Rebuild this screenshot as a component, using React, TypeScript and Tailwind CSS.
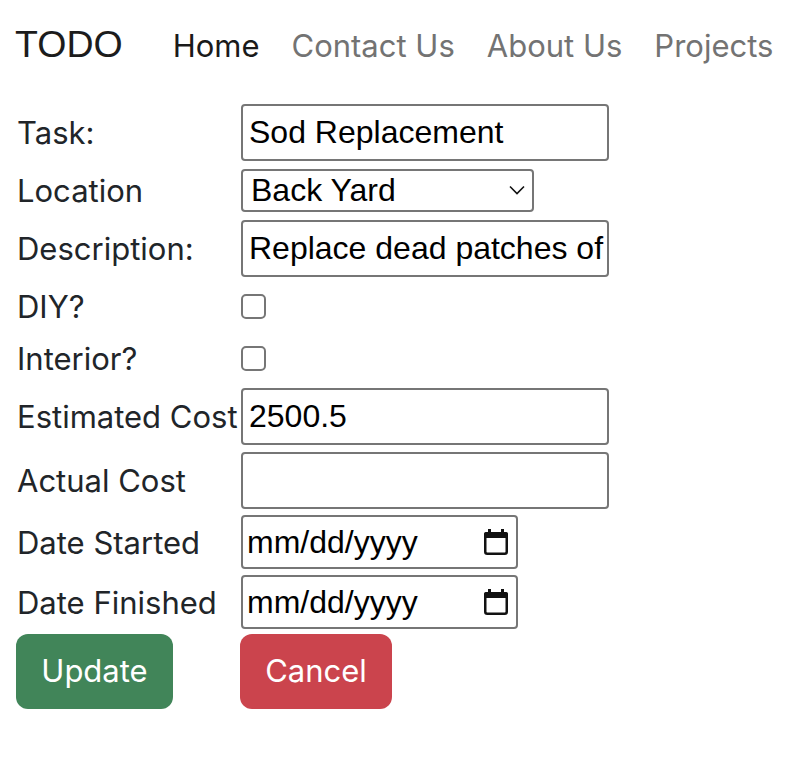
import React from "react";

const labelCls = "w-[224px] shrink-0 text-[31px] text-[#212529] leading-none";
const sans = { fontFamily: "Inter, 'Noto Sans', sans-serif" } as React.CSSProperties;

function Row({ h, label, children }: { h: string; label: string; children?: React.ReactNode }) {
  return (
    <div className={`flex items-center ${h}`}>
      <div className={labelCls} style={sans}>{label}</div>
      {children}
    </div>
  );
}

function TextBox({ w, value }: { w: string; value: string }) {
  return (
    <div
      className={`${w} h-[57px] border-2 border-[#767676] rounded-[4px] bg-white flex items-center pl-[6px] overflow-hidden whitespace-nowrap text-[32px] text-black`}
      style={{ fontFamily: "'Liberation Sans', Arial, sans-serif" }}
    >
      {value}
    </div>
  );
}

function Checkbox() {
  return <div className="w-[25px] h-[25px] border-2 border-[#767676] rounded-[5px] bg-white" />;
}

function DateBox() {
  return (
    <div
      className="w-[277px] h-[54px] border-2 border-[#767676] rounded-[4px] bg-white flex items-center pl-[4px] pr-[8px] justify-between text-[32px] text-black"
      style={{ fontFamily: "'Liberation Sans', Arial, sans-serif" }}
    >
      <span>mm/dd/yyyy</span>
      <svg width="24" height="26" viewBox="0 0 24 26">
        <rect x="4" y="0" width="3" height="4" fill="#111" />
        <rect x="17" y="0" width="3" height="4" fill="#111" />
        <rect x="0" y="3" width="24" height="6" rx="2" fill="#111" />
        <rect x="1.25" y="4.25" width="21.5" height="20.5" rx="2" fill="none" stroke="#111" strokeWidth="2.5" />
      </svg>
    </div>
  );
}

export default function App() {
  return (
    <div className="w-[808px] h-[772px] bg-white">
      <nav className="flex items-center h-[90px] pl-[15px]">
        <div
          className="text-[37.5px] text-[#1c1c1c] mr-[34px] leading-none"
          style={{ fontFamily: "'Liberation Sans', Arial, sans-serif" }}
        >
          TODO
        </div>
        <div className="flex items-center text-[31px] leading-none" style={sans}>
          <span className="px-[16px] text-[#1a1a1a]">Home</span>
          <span className="px-[16px] text-[#737373]">Contact Us</span>
          <span className="px-[16px] text-[#737373]">About Us</span>
          <span className="px-[16px] text-[#737373]">Projects</span>
        </div>
      </nav>
      <div className="pl-[17px] pt-[10px]">
        <Row h="h-[64px]" label="Task:">
          <TextBox w="w-[368px]" value="Sod Replacement" />
        </Row>
        <Row h="h-[52px]" label="Location">
          <div
            className="w-[293px] h-[43px] border-2 border-[#767676] rounded-[4px] bg-white flex items-center justify-between pl-[8px] pr-[7px] text-[32px] text-black"
            style={{ fontFamily: "'Liberation Sans', Arial, sans-serif" }}
          >
            <span>Back Yard</span>
            <svg width="16" height="10" viewBox="0 0 16 10">
              <path d="M1 1.5 L8 8.5 L15 1.5" fill="none" stroke="#111" strokeWidth="1.6" />
            </svg>
          </div>
        </Row>
        <Row h="h-[64px]" label="Description:">
          <TextBox w="w-[368px]" value="Replace dead patches of grass in the back yard" />
        </Row>
        <Row h="h-[52px]" label="DIY?">
          <Checkbox />
        </Row>
        <Row h="h-[52px]" label="Interior?">
          <Checkbox />
        </Row>
        <Row h="h-[64px]" label="Estimated Cost">
          <TextBox w="w-[368px]" value="2500.5" />
        </Row>
        <Row h="h-[64px]" label="Actual Cost">
          <TextBox w="w-[368px]" value="" />
        </Row>
        <Row h="h-[60px]" label="Date Started">
          <DateBox />
        </Row>
        <Row h="h-[60px]" label="Date Finished">
          <DateBox />
        </Row>
        <div className="flex items-center h-[78px] -ml-[1px]">
          <div
            className="w-[157px] h-[75px] rounded-[12px] bg-[#418559] text-white text-[31px] flex items-center justify-center"
            style={sans}
          >
            Update
          </div>
          <div
            className="ml-[67px] w-[152px] h-[75px] rounded-[12px] bg-[#cb444d] text-white text-[31px] flex items-center justify-center"
            style={sans}
          >
            Cancel
          </div>
        </div>
      </div>
    </div>
  );
}
